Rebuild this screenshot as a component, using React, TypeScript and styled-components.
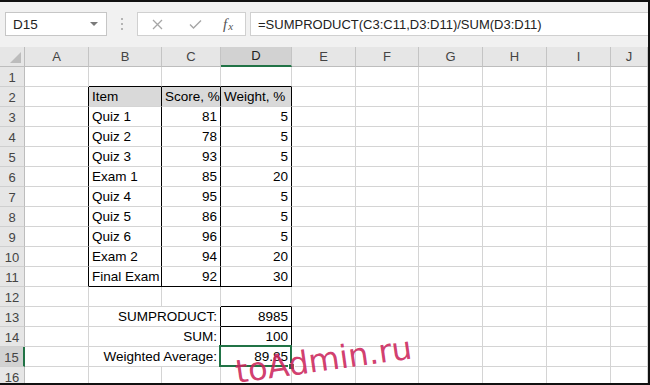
import React from 'react';
import styled, { createGlobalStyle } from 'styled-components';

const GREEN = '#217346';
const GRID = '#d4d4d4';
const BLACK = '#000';

const GlobalStyle = createGlobalStyle`
  html, body { margin: 0; padding: 0; background: #fff; }
  body { font-family: "Liberation Sans", Arial, sans-serif; }
`;

const Frame = styled.div`
  position: relative;
  width: 650px;
  height: 385px;
  box-sizing: border-box;
  border-top: 2px solid #111;
  border-right: 2px solid #111;
  border-bottom: 2px solid #111;
  overflow: hidden;
  background: #fff;
  display: flex;
  flex-direction: column;
`;

const Toolbar = styled.div`
  height: 45px;
  flex: none;
  display: flex;
  align-items: flex-start;
  padding: 10px 0 0 5px;
  box-sizing: border-box;
  background: #f1f1f1;
`;

const NameBox = styled.div`
  width: 102px;
  height: 24px;
  box-sizing: border-box;
  border: 1px solid #c6c6c6;
  background: #fff;
  display: flex;
  align-items: center;
  justify-content: space-between;
  padding: 0 8px 0 7px;
  font-size: 13.5px;
  color: #222;
`;

const Caret = styled.span`
  width: 0;
  height: 0;
  border-left: 4px solid transparent;
  border-right: 4px solid transparent;
  border-top: 4px solid #7a7a7a;
`;

const Dots = styled.div`
  width: 30px;
  height: 24px;
  display: flex;
  flex-direction: column;
  align-items: center;
  justify-content: center;
  gap: 3px;

  span {
    width: 2px;
    height: 2px;
    background: #b4b4b4;
  }
`;

const FxBox = styled.div`
  width: 109px;
  height: 24px;
  box-sizing: border-box;
  border: 1px solid #d0d0d0;
  background: #fff;
  display: flex;
  align-items: center;
`;

const FxSlot = styled.div<{ $w: number }>`
  width: ${p => p.$w}px;
  height: 100%;
  display: flex;
  align-items: center;
  justify-content: center;
`;

const FxLabel = styled.span`
  font-family: "Liberation Serif", "Times New Roman", serif;
  font-style: italic;
  font-size: 15px;
  color: #555;
  sub {
    font-size: 11px;
    vertical-align: -1px;
    margin-left: 1px;
  }
`;

const FormulaInput = styled.div`
  flex: 1;
  margin-left: 4px;
  height: 24px;
  box-sizing: border-box;
  border: 1px solid #d0d0d0;
  border-right: none;
  background: #fff;
  display: flex;
  align-items: center;
  padding-left: 7px;
  font-size: 13px;
  color: #222;
  white-space: nowrap;
`;

const Grid = styled.div`
  display: grid;
  grid-template-columns: 25px 64px 73px 59px 71px 64px 63px 64px 64px 64px 1fr;
  grid-template-rows: 20px;
  grid-auto-rows: 20px;
  font-size: 13.5px;
  color: #000;
`;

const Corner = styled.div`
  box-sizing: border-box;
  background: #e6e6e6;
  border-right: 1px solid #bdbdbd;
  border-bottom: 1px solid #bdbdbd;
  display: flex;
  align-items: flex-end;
  justify-content: flex-end;
  padding: 0 3px 3px 0;
`;

const ColHead = styled.div<{ $active?: boolean }>`
  box-sizing: border-box;
  display: flex;
  align-items: flex-end;
  justify-content: center;
  padding-bottom: 2px;
  background: ${p => (p.$active ? '#d2d2d2' : '#e6e6e6')};
  border-right: 1px solid #c4c4c4;
  border-bottom: ${p => (p.$active ? `2px solid ${GREEN}` : '1px solid #bdbdbd')};
  color: ${p => (p.$active ? '#222' : '#444')};
  font-size: 13px;
`;

const RowHead = styled.div<{ $active?: boolean }>`
  box-sizing: border-box;
  display: flex;
  align-items: center;
  justify-content: center;
  background: ${p => (p.$active ? '#d2d2d2' : '#e6e6e6')};
  border-right: ${p => (p.$active ? `2px solid ${GREEN}` : '1px solid #bdbdbd')};
  border-bottom: 1px solid #cfcfcf;
  color: #444;
  font-size: 13px;
  padding-top: 1px;
`;

const Cell = styled.div<{
  $align?: 'left' | 'right';
  $fill?: boolean;
  $r: string;
  $b: string;
  $span?: number;
  $selected?: boolean;
}>`
  box-sizing: border-box;
  grid-column: span ${p => p.$span ?? 1};
  background: ${p => (p.$fill ? '#d9d9d9' : '#fff')};
  border-right: 1px solid ${p => p.$r};
  border-bottom: 1px solid ${p => p.$b};
  padding: 0 3px 1px;
  display: flex;
  align-items: flex-end;
  justify-content: ${p => (p.$align === 'right' ? 'flex-end' : 'flex-start')};
  line-height: 16px;
  white-space: nowrap;
  ${p =>
    p.$selected &&
    `
    position: relative;
    z-index: 2;
    &::after {
      content: '';
      position: absolute;
      top: -2px;
      left: -2px;
      right: -1px;
      bottom: -1px;
      border: 2px solid ${GREEN};
    }
    &::before {
      content: '';
      position: absolute;
      right: -4px;
      bottom: -4px;
      width: 5px;
      height: 5px;
      background: ${GREEN};
      border: 1px solid #fff;
      z-index: 3;
    }
  `}
`;

const Watermark = styled.span`
  position: absolute;
  left: 238px;
  top: 352px;
  font-family: "DejaVu Sans", Verdana, sans-serif;
  font-size: 32px;
  line-height: 36px;
  color: rgba(204, 38, 92, 0.9);
  transform: rotate(-8deg);
  transform-origin: left bottom;
  white-space: nowrap;
  z-index: 5;
`;

const COLS = ['A', 'B', 'C', 'D', 'E', 'F', 'G', 'H', 'I', 'J'];

const table: string[][] = [
  ['Item', 'Score, %', 'Weight, %'],
  ['Quiz 1', '81', '5'],
  ['Quiz 2', '78', '5'],
  ['Quiz 3', '93', '5'],
  ['Exam 1', '85', '20'],
  ['Quiz 4', '95', '5'],
  ['Quiz 5', '86', '5'],
  ['Quiz 6', '96', '5'],
  ['Exam 2', '94', '20'],
  ['Final Exam', '92', '30'],
];

const totals: Record<number, [string, string]> = {
  13: ['SUMPRODUCT:', '8985'],
  14: ['SUM:', '100'],
  15: ['Weighted Average:', '89.85'],
};

// which cell edges are drawn black (table outline, result boxes)
const rightBlack = (r: number, c: number) =>
  (r >= 2 && r <= 11 && c <= 3) || (r >= 13 && r <= 15 && (c === 2 || c === 3));
const bottomBlack = (r: number, c: number) =>
  ((r === 1 || r === 11) && c >= 1 && c <= 3) || (r >= 12 && r <= 15 && c === 3);

function renderRow(r: number) {
  const cells: React.ReactNode[] = [];
  for (let c = 0; c < COLS.length; c++) {
    const rc = rightBlack(r, c) ? BLACK : GRID;
    const bc = bottomBlack(r, c) ? BLACK : GRID;
    if (totals[r] && c === 1) {
      // B:C merged label
      cells.push(
        <Cell key={c} $span={2} $align="right" $r={rightBlack(r, 2) ? BLACK : GRID} $b={GRID}>
          {totals[r][0]}
        </Cell>
      );
      c++;
      continue;
    }
    let text = '';
    let align: 'left' | 'right' = 'left';
    let fill = false;
    if (r >= 2 && r <= 11 && c >= 1 && c <= 3) {
      text = table[r - 2][c - 1];
      fill = r === 2;
      align = r > 2 && c > 1 ? 'right' : 'left';
    }
    if (totals[r] && c === 3) {
      text = totals[r][1];
      align = 'right';
    }
    cells.push(
      <Cell key={c} $align={align} $fill={fill} $r={rc} $b={bc} $selected={r === 15 && c === 3}>
        {text}
      </Cell>
    );
  }
  return cells;
}

function App() {
  const rows = Array.from({ length: 16 }, (_, i) => i + 1);
  return (
    <Frame>
      <GlobalStyle />
      <Toolbar>
        <NameBox>
          D15
          <Caret />
        </NameBox>
        <Dots>
          <span />
          <span />
          <span />
        </Dots>
        <FxBox>
          <FxSlot $w={38}>
            <svg width="11" height="11" viewBox="0 0 11 11">
              <path d="M1 1L10 10M10 1L1 10" stroke="#a6a6a6" strokeWidth="1.3" fill="none" />
            </svg>
          </FxSlot>
          <FxSlot $w={38}>
            <svg width="13" height="10" viewBox="0 0 13 10">
              <path d="M1 5.5L4.5 9L12 1.5" stroke="#a6a6a6" strokeWidth="1.4" fill="none" />
            </svg>
          </FxSlot>
          <FxSlot $w={28}>
            <FxLabel>
              f<sub>x</sub>
            </FxLabel>
          </FxSlot>
        </FxBox>
        <FormulaInput>=SUMPRODUCT(C3:C11,D3:D11)/SUM(D3:D11)</FormulaInput>
      </Toolbar>
      <Grid>
        <Corner>
          <svg width="11" height="11" viewBox="0 0 11 11">
            <polygon points="11,0 11,11 0,11" fill="#bcbcbc" />
          </svg>
        </Corner>
        {COLS.map(col => (
          <ColHead key={col} $active={col === 'D'}>
            {col}
          </ColHead>
        ))}
        {rows.map(r => (
          <React.Fragment key={r}>
            <RowHead $active={r === 15}>{r}</RowHead>
            {renderRow(r)}
          </React.Fragment>
        ))}
      </Grid>
      <Watermark>toAdmin.ru</Watermark>
    </Frame>
  );
}

export default App;
